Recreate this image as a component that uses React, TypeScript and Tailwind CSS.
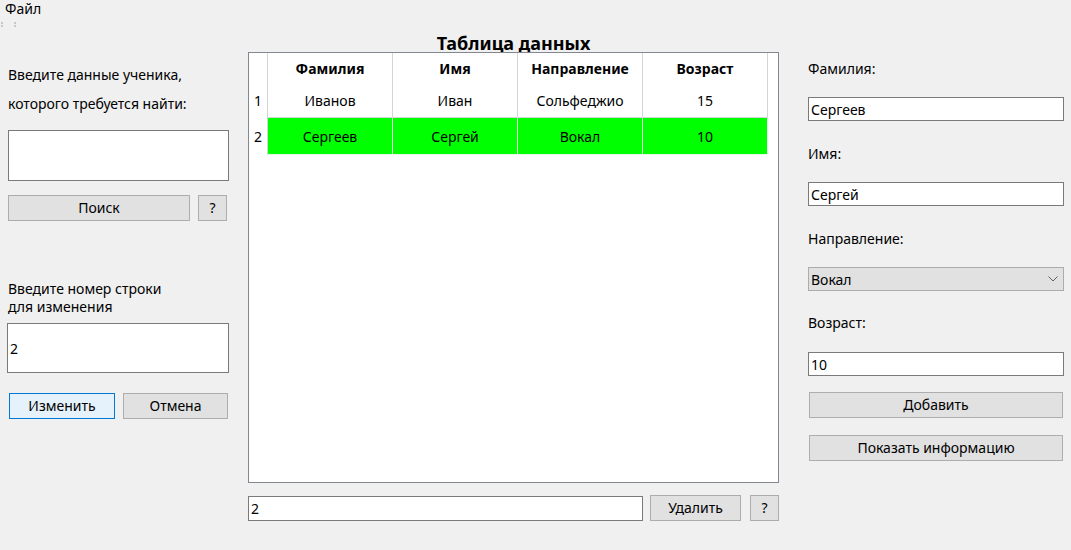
import React from 'react';

const Button: React.FC<{ className?: string; active?: boolean; children: React.ReactNode }> = ({ className = '', active, children }) => (
  <button
    className={`h-[26px] border text-[14px] leading-none flex items-center justify-center ${
      active ? 'bg-[#e5f1fb] border-[#0078d7]' : 'bg-[#e1e1e1] border-[#adadad]'
    } ${className}`}
  >
    {children}
  </button>
);

const TextBox: React.FC<{ className?: string; value?: string }> = ({ className = '', value = '' }) => (
  <div className={`bg-white border border-[#7a7a7a] flex items-center pl-[2px] ${className}`}>{value}</div>
);

const rows = [
  { n: '1', last: 'Иванов', first: 'Иван', dir: 'Сольфеджио', age: '15', hl: false },
  { n: '2', last: 'Сергеев', first: 'Сергей', dir: 'Вокал', age: '10', hl: true },
];

const App: React.FC = () => {
  return (
    <div className="w-[1071px] h-[550px] bg-[#f0f0f0] text-[14px] text-black overflow-hidden font-['Noto_Sans',sans-serif]">
      {/* menu bar */}
      <div className="h-[20px] pl-[5px] leading-[18px] text-[14px]">Файл</div>
      <div className="h-[10px] flex gap-[9px] pl-[1px] pt-[2px]">
        <div className="grid grid-cols-2 gap-[1px] w-[4px] h-[5px]">
          <span className="bg-[#c8c8c8]" />
          <span />
          <span className="bg-[#c8c8c8]" />
          <span />
        </div>
        <div className="grid grid-cols-2 gap-[1px] w-[4px] h-[5px]">
          <span className="bg-[#c8c8c8]" />
          <span />
          <span className="bg-[#c8c8c8]" />
          <span />
        </div>
      </div>

      <div className="flex pl-[8px]">
        {/* left column */}
        <div className="w-[221px] flex flex-col">
          <div className="mt-[36px] leading-[18px]">Введите данные ученика,</div>
          <div className="mt-[11px] leading-[18px]">которого требуется найти:</div>
          <TextBox className="mt-[17px] h-[51px]" />
          <div className="mt-[14px] flex">
            <Button className="w-[182px]">Поиск</Button>
            <Button className="w-[29px] ml-[8px]">?</Button>
          </div>
          <div className="mt-[59px] leading-[18px]">
            Введите номер строки
            <br />
            для изменения
          </div>
          <TextBox className="mt-[7px] h-[50px] -ml-[1px]" value="2" />
          <div className="mt-[20px] flex">
            <Button active className="w-[106px] ml-[1px]">Изменить</Button>
            <Button className="w-[105px] ml-[8px]">Отмена</Button>
          </div>
        </div>

        {/* center column */}
        <div className="w-[531px] ml-[19px] flex flex-col">
          <div className="h-[22px] text-center font-bold text-[18px] leading-[26px]">Таблица данных</div>
          <div className="h-[431px] bg-white border border-[#828790]">
            <div className="grid grid-cols-[19px_125px_125px_125px_125px] h-[30px] font-bold">
              <div className="border-r border-[#d5d5d5]" />
              {['Фамилия', 'Имя', 'Направление', 'Возраст'].map((h) => (
                <div key={h} className="border-r border-[#d5d5d5] flex items-center justify-center">
                  {h}
                </div>
              ))}
            </div>
            {rows.map((r, i) => (
              <div
                key={r.n}
                className={`grid grid-cols-[19px_125px_125px_125px_125px] ${i === 0 ? 'h-[35px]' : 'h-[37px]'}`}
              >
                <div className="border-r border-[#d5d5d5] flex items-center justify-center">{r.n}</div>
                {[r.last, r.first, r.dir, r.age].map((c, j) => (
                  <div
                    key={j}
                    className={`border-r border-b flex items-center justify-center ${
                      r.hl ? 'bg-[#00ff00] border-[#e6f7e6]' : 'border-[#d5d5d5]'
                    }`}
                  >
                    {c}
                  </div>
                ))}
              </div>
            ))}
          </div>
          <div className="mt-[12px] flex items-center">
            <TextBox className="w-[395px] h-[25px]" value="2" />
            <Button className="w-[91px] ml-[7px]">Удалить</Button>
            <Button className="w-[29px] ml-[9px]">?</Button>
          </div>
        </div>

        {/* right column */}
        <div className="w-[256px] ml-[29px] flex flex-col">
          <div className="mt-[30px] leading-[18px]">Фамилия:</div>
          <TextBox className="mt-[19px] h-[24px]" value="Сергеев" />
          <div className="mt-[24px] leading-[18px]">Имя:</div>
          <TextBox className="mt-[19px] h-[24px]" value="Сергей" />
          <div className="mt-[24px] leading-[18px]">Направление:</div>
          <div className="mt-[19px] h-[24px] bg-[#e1e1e1] border border-[#acacac] flex items-center justify-between pl-[2px] pr-[5px]">
            <span>Вокал</span>
            <svg width="10" height="6" viewBox="0 0 10 6" className="text-[#606060]">
              <polyline points="0.5,0.5 5,5 9.5,0.5" fill="none" stroke="currentColor" strokeWidth="1" />
            </svg>
          </div>
          <div className="mt-[23px] leading-[18px]">Возраст:</div>
          <TextBox className="mt-[20px] h-[24px]" value="10" />
          <Button className="mt-[16px] ml-[1px] w-[254px]">Добавить</Button>
          <Button className="mt-[17px] ml-[1px] w-[254px]">Показать информацию</Button>
        </div>
      </div>
    </div>
  );
};

export default App;
